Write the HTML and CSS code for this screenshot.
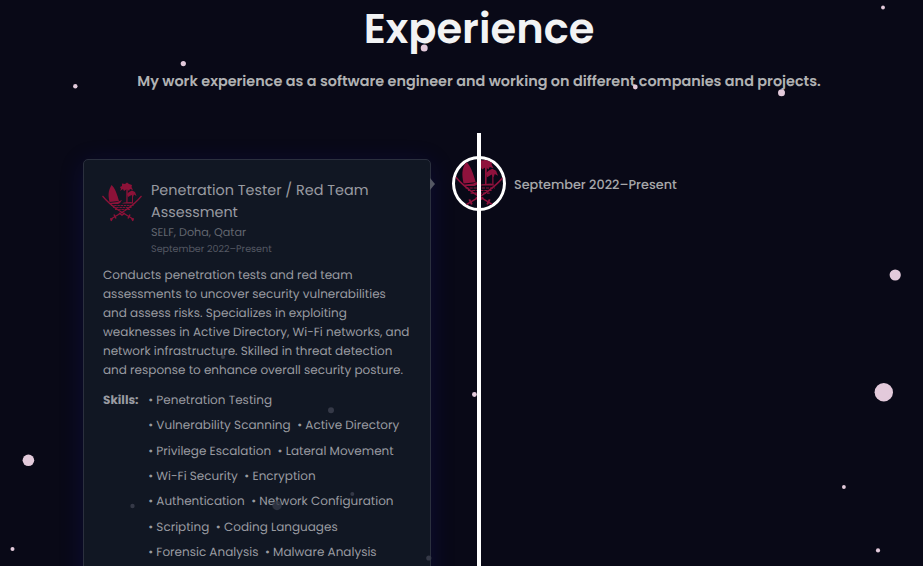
FILE: index.html
```html
<!DOCTYPE html>
<html lang="en">
<head>
<meta charset="utf-8">
<title>Experience</title>
<link rel="stylesheet" href="styles.css">
</head>
<body>
<svg class="defs" width="0" height="0">
  <symbol id="emblem" viewBox="0 0 40 40">
    <g fill="currentColor">
      <path d="M9.500 3C6 9 6 13 7.500 20L17 19C15 12 13 6 9.500 3Z"/>
      <path d="M7 21L15 20L20 18L18 21L16 22H8Z"/>
      <path d="M18 5L20 4L20 1.500L23 2L25 .5L27 2L30 3L29.500 5L31 8L28 7L27 9L25 7L22 9L21 7L18 9L19 7Z"/>
      <path d="M25 12L27 10L30 8.500L33 10L34.500 14L32 12.500L31 15L29.500 13L26 15Z"/>
      <path d="M24.300 7H25.800L25.500 21H24.300ZM30 12H30.900L31 21H30Z"/>
      <path d="M22 20.500L29 20L33 21.500H20Z"/>
    </g>
    <g fill="none" stroke="currentColor">
      <path stroke-width=".9" stroke-dasharray="2.500 .7" d="M9 23.500H32M11 25.500H30M13 27.500H28"/>
      <path stroke-width="1.200" d="M.5 14Q7 22 17 28.500L31 37M39.500 14Q33 22 23 28.500L9 37"/>
      <path stroke-width="1.500" d="M12 32.500L14 36.500M28 32.500L26 36.500M8 37H10L9 39M32 37H30L31 39M17 31L20 33L23 31"/>
    </g>
  </symbol>
</svg>
<main class="page">
  <h1 class="title">Experience</h1>
  <p class="subtitle">My work experience as a software engineer and working on different companies and projects.</p>
  <section class="timeline">
    <article class="card">
      <header class="head">
        <svg class="logo"><use href="#emblem"/></svg>
        <div class="meta">
          <h2 class="role">Penetration Tester / Red Team<br>Assessment</h2>
          <div class="company">SELF, Doha, Qatar</div>
          <div class="when">September 2022–Present</div>
        </div>
      </header>
      <p class="desc">Conducts penetration tests and red team<br>assessments to uncover security vulnerabilities<br>and assess risks. Specializes in exploiting<br>weaknesses in Active Directory, Wi-Fi networks, and<br>network infrastructure. Skilled in threat detection<br>and response to enhance overall security posture.</p>
      <div class="skills">
        <b>Skills:</b>
        <ul class="list">
          <li><span>• Penetration Testing</span></li>
          <li><span>• Vulnerability Scanning</span><span>• Active Directory</span></li>
          <li><span>• Privilege Escalation</span><span>• Lateral Movement</span></li>
          <li><span>• Wi-Fi Security</span><span>• Encryption</span></li>
          <li><span>• Authentication</span><span>• Network Configuration</span></li>
          <li><span>• Scripting</span><span>• Coding Languages</span></li>
          <li><span>• Forensic Analysis</span><span>• Malware Analysis</span></li>
        </ul>
      </div>
      <i class="arrow"></i>
    </article>
    <div class="axis">
      <div class="node"><svg class="badge"><use href="#emblem"/></svg></div>
      <div class="line"></div>
    </div>
    <div class="date">September 2022–Present</div>
  </section>
</main>
<svg class="stars" width="923" height="566">
  <g fill="#e3cadb">
    <circle cx="883" cy="7.500" r="1.900"/><circle cx="183.300" cy="63.600" r="2.600"/><circle cx="75.300" cy="86.300" r="2.200"/>
    <circle cx="424.200" cy="48" r="3.500"/><circle cx="635.300" cy="87" r="2.400"/><circle cx="781.500" cy="92.700" r="3.500"/>
    <circle cx="895.200" cy="275" r="5.600"/><circle cx="883.800" cy="392.300" r="9.200"/><circle cx="28.400" cy="460.300" r="5.800"/>
    <circle cx="474.400" cy="394.500" r="2.400"/><circle cx="843.900" cy="487" r="1.900"/><circle cx="878" cy="550.400" r="2.100"/><circle cx="12.500" cy="549" r="2"/>
  </g>
  <g fill="#353947">
    <circle cx="331" cy="410.200" r="3"/><circle cx="132.500" cy="506" r="2.200"/><circle cx="277" cy="505.500" r="4.700" opacity=".8"/>
    <circle cx="352.300" cy="494" r="2"/><circle cx="428.800" cy="558" r="2.600"/><circle cx="223" cy="357" r="2"/>
  </g>
</svg>
</body>
</html>
```

FILE: styles.css
```css
* { box-sizing: border-box; }
body { margin: 0; background: #090917; font-family: Poppins, Inter, sans-serif; text-rendering: geometricPrecision; height: 566px; overflow: hidden; position: relative; }
.defs { position: absolute; }
.page { height: 566px; overflow: hidden; padding-left: 35px; white-space: nowrap; }
.title { margin: 0; height: 58px; line-height: 57px; font-size: 41.600px; font-weight: 600; color: #f2f3f4; text-align: center; }
.subtitle { margin: 13px 0 0; height: 22px; line-height: 22px; font-size: 14.400px; font-weight: 600; color: #b1b2b3; text-align: center; }
.timeline { display: flex; align-items: flex-start; margin: 40px 0 0 48px; height: 433px; }
.card { position: relative; width: 348px; height: 460px; margin-top: 26px; padding: 20px 19px 0; background: #111723; border: 1px solid #2b303e; border-radius: 5px; box-shadow: 0 4px 24px rgba(23, 23, 170, .2); color: #999ba1; }
.head { display: flex; gap: 8px; height: 78px; }
.logo { width: 40px; height: 42px; color: #8c1238; margin: 1px 0 0 -1px; }
.meta { display: flex; flex-direction: column; margin-left: 1px; }
.role { margin: 0; font-size: 14.400px; line-height: 22px; font-weight: 400; }
.company { margin: -1px 0 1px; font-size: 11.200px; line-height: 19px; color: #62666f; }
.when { font-size: 9.600px; line-height: 14px; color: #555963; }
.desc { margin: 8px 0 0; font-size: 12px; line-height: 19px; }
.skills { display: flex; gap: 9.200px; margin-top: 8px; font-size: 12px; line-height: 25.350px; }
.skills b { width: 36px; }
.list { margin: 0; padding: 0; list-style: none; }
.list li { display: flex; gap: 6.500px; }
.arrow { position: absolute; left: 346px; top: 18px; border: 6px solid transparent; border-right: 0; border-left: 5px solid #555863; }
.axis { position: relative; width: 54px; height: 433px; margin-left: 21px; padding-top: 23px; }
.line { position: absolute; left: 25px; top: 0; width: 4px; height: 433px; background: #fff; }
.node { width: 54px; height: 55px; border: 3px solid #fff; border-radius: 50%; overflow: hidden; display: flex; align-items: center; justify-content: center; }
.badge { flex: none; width: 51px; height: 51px; color: #8f123d; }
.date { margin: 42px 0 0 8px; font-size: 12.800px; line-height: 22px; font-weight: 500; color: #a6a7aa; }
.stars { position: absolute; left: 0; top: 0; }
```
